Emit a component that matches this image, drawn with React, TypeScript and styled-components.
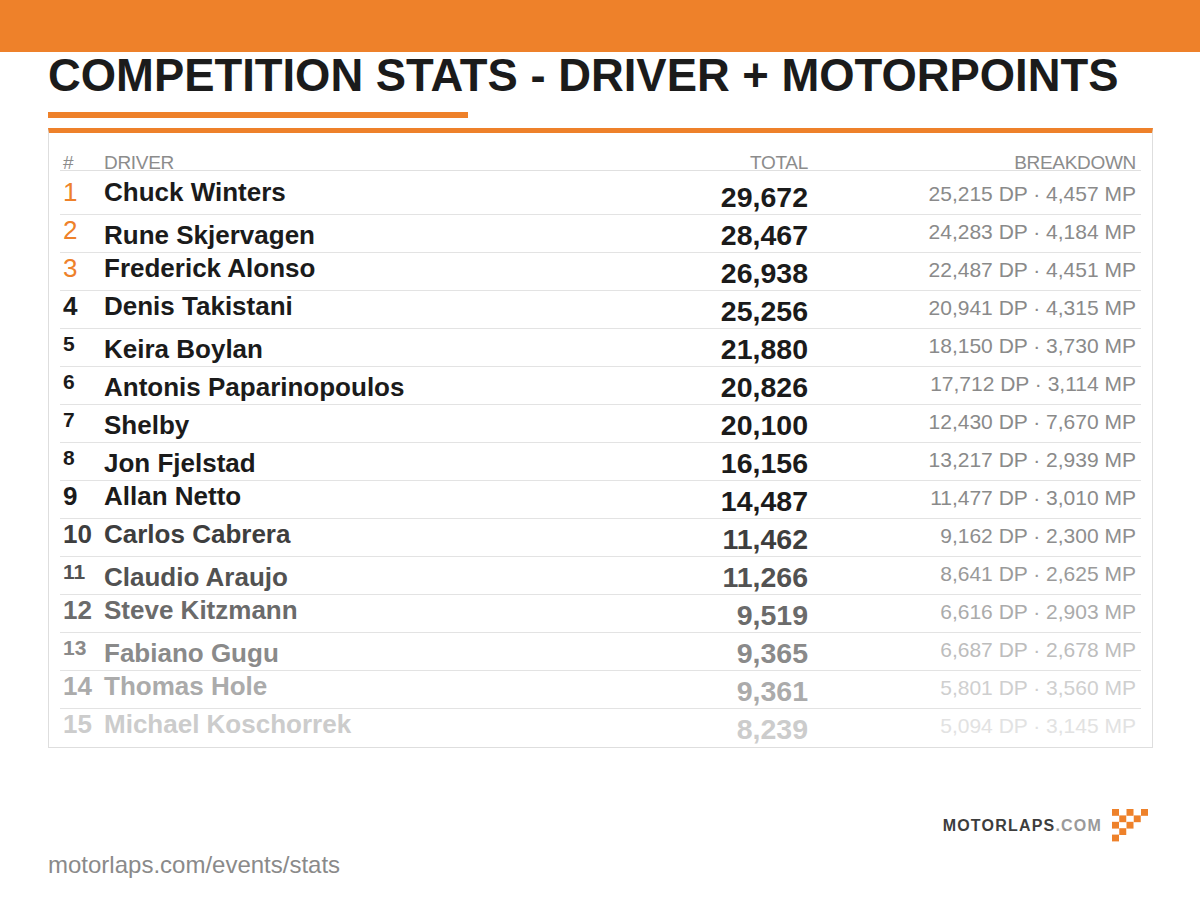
import styled, { createGlobalStyle } from 'styled-components'

const ORANGE = '#ee812a'

const GlobalStyle = createGlobalStyle`
  html, body {
    margin: 0;
    padding: 0;
    background: #fff;
  }
  body {
    font-family: 'Liberation Sans', Arial, Helvetica, sans-serif;
  }
`

type Driver = {
  name: string
  total: string
  dp: string
  mp: string
  low?: boolean
  smallRank?: boolean
  ink: string
  faint: string
}

const drivers: Driver[] = [
  { name: 'Chuck Winters', total: '29,672', dp: '25,215', mp: '4,457', ink: '#1b1b1b', faint: '#8a8a8a' },
  { name: 'Rune Skjervagen', total: '28,467', dp: '24,283', mp: '4,184', low: true, ink: '#1b1b1b', faint: '#8a8a8a' },
  { name: 'Frederick Alonso', total: '26,938', dp: '22,487', mp: '4,451', ink: '#1b1b1b', faint: '#8a8a8a' },
  { name: 'Denis Takistani', total: '25,256', dp: '20,941', mp: '4,315', ink: '#1b1b1b', faint: '#8a8a8a' },
  { name: 'Keira Boylan', total: '21,880', dp: '18,150', mp: '3,730', low: true, smallRank: true, ink: '#1b1b1b', faint: '#8a8a8a' },
  { name: 'Antonis Paparinopoulos', total: '20,826', dp: '17,712', mp: '3,114', low: true, smallRank: true, ink: '#1b1b1b', faint: '#8a8a8a' },
  { name: 'Shelby', total: '20,100', dp: '12,430', mp: '7,670', low: true, smallRank: true, ink: '#1b1b1b', faint: '#8a8a8a' },
  { name: 'Jon Fjelstad', total: '16,156', dp: '13,217', mp: '2,939', low: true, smallRank: true, ink: '#1b1b1b', faint: '#8a8a8a' },
  { name: 'Allan Netto', total: '14,487', dp: '11,477', mp: '3,010', ink: '#1b1b1b', faint: '#8a8a8a' },
  { name: 'Carlos Cabrera', total: '11,462', dp: '9,162', mp: '2,300', ink: '#3e3e3e', faint: '#8e8e8e' },
  { name: 'Claudio Araujo', total: '11,266', dp: '8,641', mp: '2,625', low: true, smallRank: true, ink: '#525252', faint: '#9a9a9a' },
  { name: 'Steve Kitzmann', total: '9,519', dp: '6,616', mp: '2,903', ink: '#6b6b6b', faint: '#ababab' },
  { name: 'Fabiano Gugu', total: '9,365', dp: '6,687', mp: '2,678', low: true, smallRank: true, ink: '#8a8a8a', faint: '#bdbdbd' },
  { name: 'Thomas Hole', total: '9,361', dp: '5,801', mp: '3,560', ink: '#ababab', faint: '#cfcfcf' },
  { name: 'Michael Koschorrek', total: '8,239', dp: '5,094', mp: '3,145', ink: '#cccccc', faint: '#e2e2e2' },
]

const Page = styled.div`
  width: 1200px;
  height: 900px;
  display: flex;
  flex-direction: column;
  overflow: hidden;
`

const TopBar = styled.div`
  height: 52px;
  background: ${ORANGE};
  flex-shrink: 0;
`

const Body = styled.main`
  display: flex;
  flex-direction: column;
  padding: 0 47px 0 48px;
`

const Title = styled.h1`
  margin: 1px 0 0;
  font-size: 45.4px;
  line-height: 45px;
  font-weight: 700;
  color: #1b1b1b;
  white-space: nowrap;
`

const Underline = styled.div`
  margin-top: 14px;
  width: 420px;
  height: 6px;
  background: ${ORANGE};
`

const Board = styled.section`
  margin-top: 10px;
  border: 1px solid #dedede;
  border-top: 5px solid ${ORANGE};
  padding: 0 11px;
`

const Grid = styled.div`
  display: grid;
  grid-template-columns: 40px 1fr 180px 329px;
`

const HeadRow = styled(Grid)`
  height: 38px;
  box-sizing: border-box;
  border-bottom: 1px solid #e0e0e0;
  align-items: end;
`

const HeadCell = styled.span<{ $right?: boolean; $pad?: number }>`
  font-size: 19px;
  line-height: 15px;
  letter-spacing: -0.3px;
  color: #8c8c8c;
  text-align: ${(p) => (p.$right ? 'right' : 'left')};
  padding: 0 ${(p) => (p.$right ? p.$pad ?? 4 : 0)}px 0 ${(p) => (p.$right ? 0 : p.$pad ?? 4)}px;
`

const Row = styled(Grid)<{ $first?: boolean; $last?: boolean }>`
  box-sizing: border-box;
  height: ${(p) => (p.$first ? 44 : 38)}px;
  padding-top: ${(p) => (p.$first ? 6 : 0)}px;
  border-bottom: ${(p) => (p.$last ? 'none' : '1px solid #e3e3e3')};
  align-items: start;
  white-space: nowrap;
`

const Rank = styled.span<{ $podium?: boolean; $small?: boolean; $ink: string }>`
  padding: ${(p) => (p.$small ? 4 : 2)}px 0 0 3px;
  font-size: ${(p) => (p.$small ? 21 : 26)}px;
  line-height: ${(p) => (p.$small ? 21 : 26)}px;
  font-weight: ${(p) => (p.$podium ? 400 : 700)};
  color: ${(p) => (p.$podium ? ORANGE : p.$ink)};
`

const Name = styled.span<{ $low?: boolean; $ink: string }>`
  padding: ${(p) => (p.$low ? 7 : 2)}px 0 0 4px;
  font-size: 26px;
  line-height: 26px;
  font-weight: 700;
  color: ${(p) => p.$ink};
`

const Total = styled.span<{ $ink: string }>`
  padding: 6px 4px 0 0;
  font-size: 28.5px;
  line-height: 28.5px;
  font-weight: 700;
  text-align: right;
  color: ${(p) => p.$ink};
`

const Breakdown = styled.span<{ $ink: string }>`
  padding: 6px 5px 0 0;
  font-size: 21px;
  line-height: 21px;
  text-align: right;
  color: ${(p) => p.$ink};
`

const LogoRow = styled.div`
  margin-top: 61px;
  display: flex;
  align-items: center;
  justify-content: flex-end;
  gap: 10px;
  padding-right: 5px;
`

const LogoText = styled.span`
  font-size: 16px;
  line-height: 16px;
  font-weight: 700;
  letter-spacing: 1.2px;
  color: #3d3d3d;

  em {
    font-style: normal;
    color: #9a9a9a;
  }
`

const SiteUrl = styled.div`
  margin-top: 11px;
  font-size: 24px;
  line-height: 24px;
  color: #8a8a8a;
`

// checker flag triangle: [col, row]
const checks = [
  [0, 0], [2, 0], [4, 0],
  [1, 1], [3, 1],
  [0, 2], [2, 2],
  [1, 3],
  [0, 4],
]

const CheckerFlag = () => (
  <svg width="36" height="33" viewBox="0 0 36 33">
    {checks.map(([c, r]) => (
      <rect key={`${c}-${r}`} x={c * 7.25} y={r * 6.4} width="7" height="6.8" fill={ORANGE} />
    ))}
  </svg>
)

export default function App() {
  return (
    <Page>
      <GlobalStyle />
      <TopBar />
      <Body>
        <Title>COMPETITION STATS - DRIVER + MOTORPOINTS</Title>
        <Underline />
        <Board>
          <HeadRow>
            <HeadCell $pad={3}>#</HeadCell>
            <HeadCell>DRIVER</HeadCell>
            <HeadCell $right>TOTAL</HeadCell>
            <HeadCell $right $pad={5}>
              BREAKDOWN
            </HeadCell>
          </HeadRow>
          {drivers.map((d, i) => (
            <Row key={d.name} $first={i === 0} $last={i === drivers.length - 1}>
              <Rank $podium={i < 3} $small={d.smallRank} $ink={d.ink}>
                {i + 1}
              </Rank>
              <Name $low={d.low} $ink={d.ink}>
                {d.name}
              </Name>
              <Total $ink={d.ink}>{d.total}</Total>
              <Breakdown $ink={d.faint}>
                {d.dp} DP · {d.mp} MP
              </Breakdown>
            </Row>
          ))}
        </Board>
        <LogoRow>
          <LogoText>
            MOTORLAPS<em>.COM</em>
          </LogoText>
          <CheckerFlag />
        </LogoRow>
        <SiteUrl>motorlaps.com/events/stats</SiteUrl>
      </Body>
    </Page>
  )
}
